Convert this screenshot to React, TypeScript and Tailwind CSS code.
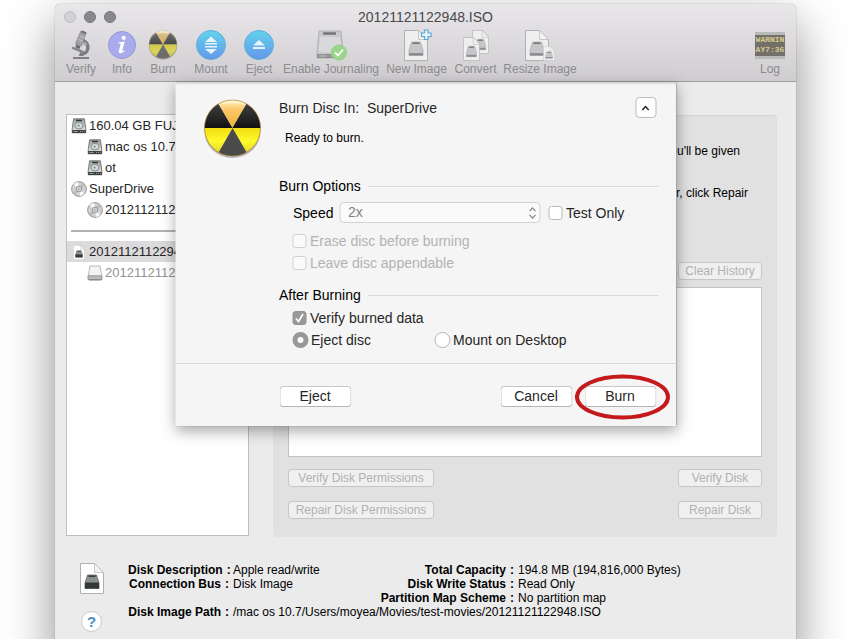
import type { ReactNode } from "react";

function DriveIcon({ className = "size-4" }: { className?: string }) {
  return (
    <svg viewBox="0 0 16 16" className={className} aria-hidden="true">
      <defs>
        <linearGradient id="drive" x1="0" y1="0" x2="0" y2="1">
          <stop offset="0" stopColor="#9aa19d" />
          <stop offset="0.75" stopColor="#d4dad7" />
          <stop offset="1" stopColor="#8a918d" />
        </linearGradient>
      </defs>
      <path d="M2.600.800h10.800l1.400 10v4H1.200v-4z" fill="url(#drive)" stroke="#5f6462" strokeWidth="0.8" />
      <path d="M1.200 12h13.600v3H1.200z" fill="#3e4341" />
      <path d="M2.500 13.500h4M9 13.500h1M11 13.500h1M13 13.500h.6" stroke="#aeb4b1" strokeWidth="0.8" />
      <path d="M5 2.500h6" stroke="#303432" strokeWidth="1.4" />
      <ellipse cx="8" cy="7.6" rx="4" ry="3.4" fill="#d5d9d7" stroke="#747a77" strokeWidth="0.8" />
      <circle cx="7.6" cy="7.6" r="1.1" fill="#858b88" />
      <path d="M8.500 8.500l2 1.800" stroke="#60666300" />
    </svg>
  );
}

function DiscIcon() {
  return (
    <svg viewBox="0 0 16 16" className="size-4" aria-hidden="true">
      <circle cx="8" cy="8" r="7.4" fill="#d3d3d3" stroke="#858585" strokeWidth="0.8" />
      <path d="M8 8L2.6 3.2A7 7 0 0 1 7 1zM8 8l5.4 4.8A7 7 0 0 1 9 15z" fill="#f7f7f7" />
      <path d="M8 8L11 1.8A7 7 0 0 1 14 5zM8 8L5 14.2A7 7 0 0 1 2 11z" fill="#bdbdbd" />
      <circle cx="8" cy="8" r="2.8" fill="#e8e8e8" stroke="#808080" strokeWidth="0.8" />
      <circle cx="8" cy="8" r="1.1" fill="#fff" stroke="#777" strokeWidth="0.6" />
    </svg>
  );
}

function VolumeIcon() {
  return (
    <svg viewBox="0 0 16 16" className="size-4" aria-hidden="true">
      <path d="M3 1h10l1.8 10v3.5H1.2V11z" fill="#f3f3f3" stroke="#ababab" strokeWidth="0.8" />
      <path d="M1.2 10.8h13.6v3.8H1.2z" fill="#bdbdbd" stroke="#8d8d8d" strokeWidth="0.8" />
      <path d="M2 15h12" stroke="#747474" strokeWidth="0.8" />
    </svg>
  );
}

function ImageDoc({ x = 0, y = 0, w = 24, h = 31, dark = false }: { x?: number; y?: number; w?: number; h?: number; dark?: boolean }) {
  return (
    <svg x={x} y={y} width={w} height={h} viewBox="0 0 24 31" preserveAspectRatio="none" aria-hidden="true">
      <path d="M.5.5h14l9 9v21H.5z" fill={dark ? "#fff" : "#efeff0"} stroke="#b0b0b3" />
      <path d="M14.5.5v9h9z" fill="#f2f2f3" stroke="#bdbdc0" strokeWidth="0.8" />
      <path d="M7.500 12h9l2.500 8v5.500H5V20z" fill={dark ? "#8b9090" : "#c6c6c9"} stroke={dark ? "#555" : "#a8a8ab"} strokeWidth="0.7" />
      <path d={dark ? "M5 19.500h14v6H5z" : "M5 23h14v2.500H5z"} fill={dark ? "#33383a" : "#8e8e92"} />
      <path d="M8.500 13.200h7" stroke={dark ? "#383d3e" : "#747478"} strokeWidth="1.600" />
    </svg>
  );
}

function BurnIcon({ className, faded = false, id }: { className: string; faded?: boolean; id: string }) {
  return (
    <svg viewBox="0 0 60 60" className={className} aria-hidden="true">
      <defs>
        <linearGradient id={id + "top"} x1="0" y1="0" x2="0" y2="1">
          <stop offset="0" stopColor="#fff3c4" />
          <stop offset="0.35" stopColor="#fbc765" />
          <stop offset="1" stopColor="#f0b23c" />
        </linearGradient>
        <linearGradient id={id + "dark"} x1="0" y1="0" x2="0" y2="1">
          <stop offset="0" stopColor="#3c3c3c" />
          <stop offset="0.5" stopColor="#2a2a2a" />
          <stop offset="1" stopColor="#111" />
        </linearGradient>
        <linearGradient id={id + "low"} x1="0" y1="0" x2="0" y2="1">
          <stop offset="0" stopColor="#f1df10" />
          <stop offset="0.55" stopColor="#fff92c" />
          <stop offset="1" stopColor="#e3da28" />
        </linearGradient>
      </defs>
      <ellipse cx="30" cy="32.500" rx="28" ry="26.500" fill="#000" opacity="0.250" />
      <g opacity={faded ? 0.6 : 1}>
        <path d="M30 29L2 29A28 28 0 0 1 16 4.800z" fill={`url(#${id}dark)`} />
        <path d="M30 29L16 4.800A28 28 0 0 1 44 4.800z" fill={`url(#${id}top)`} />
        <path d="M30 29L44 4.800A28 28 0 0 1 58 29z" fill={`url(#${id}dark)`} />
        <path d="M30 29L58 29A28 28 0 0 1 44 53.200z" fill={`url(#${id}low)`} />
        <path d="M30 29L44 53.200A28 28 0 0 1 16 53.200z" fill="#4a4a4a" />
        <path d="M30 29L16 53.200A28 28 0 0 1 2 29z" fill={`url(#${id}low)`} />
        <circle cx="30" cy="29" r="28" fill="none" stroke="#a8741c" strokeOpacity="0.600" />
        <path d="M16 6Q30-2 44 6Q30 2 16 6z" fill="#fff" opacity="0.500" />
      </g>
    </svg>
  );
}

function MicroscopeIcon() {
  return (
    <svg viewBox="0 0 24 32" className="h-8 w-6" aria-hidden="true">
      <path d="M12 2l5 2-4.500 13-6-2.300z" fill="#a2a2a5" stroke="#858588" strokeWidth="0.800" />
      <path d="M13 1.500l4.500 1.700-.700 2L12.300 3.500z" fill="#6f6f72" />
      <path d="M10.500 7l5 2M9.300 10.500l5 2" stroke="#cfcfd1" strokeWidth="0.800" />
      <path d="M7 15.500l4.500 1.800-1 2.700-4-1.500z" fill="#6d6d70" />
      <path d="M15 10c6 2.500 7.500 10 3 14.500-1.500 1.500-4 2.500-6 2.500l1-3c4.500-1 6-7 1-10.500z" fill="#7d7d80" />
      <path d="M3.500 17.500l12 4.700-.800 2.200-12-4.700z" fill="#858588" />
      <path d="M11 23l3 1.500V27h-4z" fill="#7d7d80" />
      <path d="M4 28h16v2H4z" fill="#808083" />
      <circle cx="16" cy="15" r="1.800" fill="#b0b0b2" />
    </svg>
  );
}

function RoundIcon({ kind }: { kind: "mount" | "eject" }) {
  return (
    <svg viewBox="0 0 30 30" className="size-[30px]" aria-hidden="true">
      <defs>
        <linearGradient id={kind} x1="0" y1="0" x2="0" y2="1">
          <stop offset="0" stopColor="#62d3ec" />
          <stop offset="1" stopColor="#6796e8" />
        </linearGradient>
      </defs>
      <circle cx="15" cy="15" r="14.500" fill={`url(#${kind})`} stroke="#5caee0" />
      {kind === "mount" ? (
        <path d="M15 6.500l6 5.500H9zM9 13h12v1.500H9zM9 16h12v1.500H9zM15 24l-6-5h12z" fill="#e6f3fb" />
      ) : (
        <path d="M15 10l6 5.500H9zM9 17h12v2H9z" fill="#e6f3fb" />
      )}
    </svg>
  );
}

function ToolbarItem({ label, width, children }: { label: string; width: string; children: ReactNode }) {
  return (
    <button type="button" className={`flex flex-col items-center text-xs text-[#8c8b8e] ${width}`}>
      <span className="flex h-8 items-center justify-center">{children}</span>
      <span className="h-4 leading-4 whitespace-nowrap">{label}</span>
    </button>
  );
}

function Toolbar() {
  return (
    <header className="h-[78px] rounded-t-md border-b border-[#9d9c9e] bg-linear-to-b from-[#e9e7ea] to-[#cfcdd0]">
      <div className="relative flex h-[25px] items-center pl-[9px]">
        <div className="flex gap-2">
          <button type="button" aria-label="Close" className="size-3 rounded-full border border-[#bdbcbe] bg-[#d2d1d3]" />
          <button type="button" aria-label="Minimize" className="size-3 rounded-full border border-[#77767a] bg-[#89888c]" />
          <button type="button" aria-label="Zoom" className="size-3 rounded-full border border-[#77767a] bg-[#89888c]" />
        </div>
        <h1 className="pointer-events-none absolute inset-x-0 text-center text-sm text-[#49484b]">20121121122948.ISO</h1>
      </div>
      <div className="flex gap-[9px] px-[10px]">
        <ToolbarItem label="Verify" width="w-8"><MicroscopeIcon /></ToolbarItem>
        <ToolbarItem label="Info" width="w-8">
          <svg viewBox="0 0 28 28" className="size-7" aria-hidden="true">
            <circle cx="14" cy="14" r="13.500" fill="#a9acec" stroke="#9597d8" />
            <path d="M15.700 4.800a2.100 2.100 0 1 1-.100 4.200 2.100 2.100 0 0 1 .100-4.200zM10.500 11.500l6.300-.900-2.600 9.200c-.200 1 .800.500 2-.900l.700.600c-2 3-6.700 4-6.200.800l1.900-6.700c.200-1-.600-1.200-2.200-1.200z" fill="#fff" />
          </svg>
        </ToolbarItem>
        <ToolbarItem label="Burn" width="w-8"><BurnIcon id="tb" faded className="size-[30px]" /></ToolbarItem>
        <ToolbarItem label="Mount" width="w-[46px]"><RoundIcon kind="mount" /></ToolbarItem>
        <ToolbarItem label="Eject" width="w-8"><RoundIcon kind="eject" /></ToolbarItem>
        <ToolbarItem label="Enable Journaling" width="w-[94px]">
          <svg viewBox="0 0 32 32" className="size-8" aria-hidden="true">
            <path d="M4 2h22l2 21v6H2v-6z" fill="#c9cacb" stroke="#b2b2b4" />
            <path d="M2 25h26v4H2z" fill="#8f9092" />
            <path d="M8 4.500h13" stroke="#727375" strokeWidth="2.400" />
            <path d="M5 8h20l1.500 15H3.500z" fill="#d9d9db" />
            <path d="M4 27h8M15 27h2" stroke="#c4c4c5" strokeWidth="1.200" />
            <circle cx="24" cy="23.500" r="7.500" fill="#9ad68b" stroke="#8aca7b" strokeWidth="0.800" />
            <path d="M20 23.500l3 3 5-6" fill="none" stroke="#fff" strokeWidth="1.800" />
          </svg>
        </ToolbarItem>
        <ToolbarItem label="New Image" width="w-[59px]">
          <svg viewBox="0 0 30 32" className="h-8 w-[30px]" aria-hidden="true">
            <ImageDoc x={2} y={1} w={24} h={31} />
            <path d="M22.500 1h3.500v3h3v3.500h-3v3h-3.500v-3h-3V4h3z" fill="#e8f6fd" stroke="#5fa3cf" strokeWidth="1.200" />
          </svg>
        </ToolbarItem>
        <ToolbarItem label="Convert" width="w-[41px]">
          <svg viewBox="0 0 28 32" className="h-8 w-7" aria-hidden="true">
            <ImageDoc x={10} y={1} w={17} h={24} />
            <ImageDoc x={1} y={8} w={17} h={24} />
          </svg>
        </ToolbarItem>
        <ToolbarItem label="Resize Image" width="w-[70px]">
          <svg viewBox="0 0 30 32" className="h-8 w-[30px]" aria-hidden="true">
            <ImageDoc x={0} y={1} w={24} h={31} />
            <ImageDoc x={18} y={17} w={12} h={15} />
          </svg>
        </ToolbarItem>
        <div className="grow" />
        <ToolbarItem label="Log" width="w-8">
          <span className="flex h-[27px] w-[30px] flex-col items-center justify-center overflow-hidden border-y-3 border-[#b9b9b7] bg-[#73706a] font-['Liberation_Mono'] text-[8px] leading-[10px] font-bold whitespace-nowrap text-[#d6cc8c]">
            <span>WARNIN</span>
            <span>AY7:36</span>
          </span>
        </ToolbarItem>
      </div>
    </header>
  );
}

function SidebarRow({ icon, label, tone = "" }: { icon: ReactNode; label: string; tone?: string }) {
  return (
    <li className={`flex h-[21px] items-center gap-0.5 pl-1 whitespace-nowrap ${tone}`}>
      {icon}
      <span>{label}</span>
    </li>
  );
}

function Sidebar() {
  return (
    <ul className="mb-px w-[183px] shrink-0 overflow-hidden border border-[#bfbfbf] bg-white text-[13px] text-[#262626]">
      <SidebarRow icon={<DriveIcon />} label="160.04 GB FUJ" />
      <SidebarRow icon={<DriveIcon />} label="mac os 10.7" tone="ml-4" />
      <SidebarRow icon={<DriveIcon />} label="ot" tone="ml-4" />
      <SidebarRow icon={<DiscIcon />} label="SuperDrive" />
      <SidebarRow icon={<DiscIcon />} label="2012112112" tone="ml-4" />
      <li className="flex h-[21px] items-center pl-1" aria-hidden="true">
        <span className="h-0.5 w-full bg-[#b2b2b2]" />
      </li>
      <SidebarRow
        icon={<svg viewBox="0 0 16 16" className="size-4" aria-hidden="true"><ImageDoc x={2} y={1} w={12} h={15} dark /></svg>}
        label="20121121122948"
        tone="bg-[#dcdadc]"
      />
      <SidebarRow icon={<VolumeIcon />} label="2012112112" tone="ml-4 text-[#929292]" />
    </ul>
  );
}

function DisabledButton({ children, width }: { children: ReactNode; width: string }) {
  return (
    <button type="button" disabled className={`h-[18px] rounded border border-[#c6c6c6] bg-[#f0f0f0] text-xs leading-4 whitespace-nowrap text-[#b1b1b1] ${width}`}>
      {children}
    </button>
  );
}

function FirstAid() {
  return (
    <section className="mt-px flex grow flex-col rounded-sm border-t border-[#d4d4d4] bg-[#e1e1e1] px-[15px] pt-7 pb-[18px] text-xs text-black">
      <p className="h-[14px] pr-[22px] text-right leading-[14px]">you'll be given</p>
      <p className="mt-7 h-[14px] pr-[14px] text-right leading-[14px]">installer, click Repair</p>
      <div className="mt-[62px] flex justify-end"><DisabledButton width="w-[84px]">Clear History</DisabledButton></div>
      <textarea readOnly aria-label="History" className="mt-[7px] h-[170px] w-full resize-none border border-[#c2c2c2] bg-white" />
      <div className="mt-3 flex justify-between">
        <DisabledButton width="w-[146px]">Verify Disk Permissions</DisabledButton>
        <DisabledButton width="w-[84px]">Verify Disk</DisabledButton>
      </div>
      <div className="mt-[14px] flex justify-between">
        <DisabledButton width="w-[146px]">Repair Disk Permissions</DisabledButton>
        <DisabledButton width="w-[84px]">Repair Disk</DisabledButton>
      </div>
    </section>
  );
}

function SectionTitle({ children, className }: { children: ReactNode; className: string }) {
  return (
    <div className={`flex h-[18px] items-center gap-2 ${className}`}>
      <h2 className="whitespace-nowrap">{children}</h2>
      <span className="h-px grow bg-[#dadada]" />
    </div>
  );
}

function Tick({ label, disabled, checked }: { label: string; disabled?: boolean; checked?: boolean }) {
  return (
    <label className={`flex h-[22px] items-center gap-1 whitespace-nowrap ${disabled ? "text-[#b3b3b3]" : "text-[#262626]"}`}>
      <span className="grid place-items-center">
        <input
          type="checkbox"
          disabled={disabled}
          defaultChecked={checked}
          className="peer col-start-1 row-start-1 size-[14px] appearance-none rounded-[3px] border border-[#b9b9b9] bg-white checked:border-[#929295] checked:bg-[#98989b] disabled:border-[#d0d0d0] disabled:bg-[#fafafa]"
        />
        <svg viewBox="0 0 14 14" className="pointer-events-none invisible col-start-1 row-start-1 size-[14px] peer-checked:visible" aria-hidden="true">
          <path d="M3.500 7.500l2.500 3 4.500-7.500" fill="none" stroke="#fff" strokeWidth="1.700" />
        </svg>
      </span>
      {label}
    </label>
  );
}

function Radio({ label, checked, className }: { label: string; checked?: boolean; className: string }) {
  return (
    <label className={`flex items-center gap-[3px] whitespace-nowrap text-[#262626] ${className}`}>
      <input
        type="radio"
        name="after"
        defaultChecked={checked}
        className="size-4 appearance-none rounded-full border border-[#b5b5b5] bg-white checked:border-5 checked:border-[#98989b]"
      />
      {label}
    </label>
  );
}

function PushButton({ children }: { children: ReactNode }) {
  return (
    <button type="button" className="h-[21px] w-[72px] rounded border border-[#c8c8c8] border-b-[#b4b4b4] bg-white leading-[19px] text-[#262626]">
      {children}
    </button>
  );
}

function BurnSheet() {
  return (
    <div role="dialog" aria-label="Burn Disc" className="absolute top-[78px] left-1/2 w-[501px] -translate-x-1/2 bg-[#f5f5f5] text-sm leading-[18px] text-black shadow-[0_5px_14px_rgba(0,0,0,0.35),0_0_1px_rgba(0,0,0,0.5),inset_0_3px_3px_-2px_rgba(0,0,0,0.2)]">
      <div className="flex gap-[17px] pt-[15px] pr-[18px] pl-[27px]">
        <BurnIcon id="big" className="mt-0.5 size-[60px] shrink-0" />
        <div className="grow">
          <div className="flex h-[21px] items-center pr-0.5">
            <p className="grow whitespace-pre text-[#262626]">Burn Disc In:  SuperDrive</p>
            <button type="button" aria-label="Collapse" className="flex size-[21px] items-center justify-center rounded border border-[#bcbcbc] bg-white">
              <svg viewBox="0 0 8 6" className="h-1.5 w-2" aria-hidden="true"><path d="M.800 5L4 1.500 7.200 5" fill="none" stroke="#222" strokeWidth="1.500" /></svg>
            </button>
          </div>
          <p className="mt-[11px] pl-1.5 text-xs leading-[18px]">Ready to burn.</p>
          <SectionTitle className="mt-[30px]">Burn Options</SectionTitle>
          <div className="mt-[7px] flex h-[21px] items-center pl-[14px]">
            <label htmlFor="speed" className="w-[46px]">Speed</label>
            <div className="grid w-[201px] items-center">
              <select id="speed" disabled className="col-start-1 row-start-1 h-[21px] w-full appearance-none rounded border border-[#d2d2d2] bg-[#fafafa] pl-2 text-sm leading-[19px] text-[#828282] opacity-100">
                <option>2x</option>
              </select>
              <svg viewBox="0 0 8 12" className="pointer-events-none col-start-1 row-start-1 mr-1 h-3 w-2 justify-self-end" aria-hidden="true">
                <path d="M1 4.200L4 1l3 3.200M1 7.800L4 11l3-3.200" fill="none" stroke="#8a8a8a" strokeWidth="1.200" />
              </svg>
            </div>
            <div className="ml-2"><Tick label="Test Only" /></div>
          </div>
          <div className="mt-[7px] pl-[13px]">
            <Tick label="Erase disc before burning" disabled />
            <Tick label="Leave disc appendable" disabled />
          </div>
          <SectionTitle className="mt-3">After Burning</SectionTitle>
          <div className="mt-[3px] pl-[13px]">
            <Tick label="Verify burned data" checked />
            <div className="flex h-[22px] items-center">
              <Radio label="Eject disc" checked className="w-[142px]" />
              <Radio label="Mount on Desktop" className="" />
            </div>
          </div>
        </div>
      </div>
      <div className="mt-3 flex gap-3 border-t border-[#d9d9d9] pt-[22px] pr-5 pb-[19px] pl-[104px]">
        <div className="grow"><PushButton>Eject</PushButton></div>
        <PushButton>Cancel</PushButton>
        <div className="relative h-[21px]">
          <PushButton>Burn</PushButton>
          <svg viewBox="0 0 96 46" className="pointer-events-none absolute -top-3 -left-2.5 h-[46px] w-24 max-w-none" aria-hidden="true">
            <ellipse cx="48" cy="23" rx="45.500" ry="20.500" fill="none" stroke="#c41a1c" strokeWidth="4" />
          </svg>
        </div>
      </div>
    </div>
  );
}

function DiskInfo() {
  const label = "text-right font-bold";
  return (
    <footer className="flex pt-[26px]">
      <div className="flex w-[73px] shrink-0 flex-col items-center gap-[17px]">
        <svg viewBox="0 0 24 31" className="h-[31px] w-6" aria-hidden="true"><ImageDoc dark /></svg>
        <button type="button" className="size-[21px] rounded-full border border-[#c9c9c9] bg-white text-[15px] leading-[19px] font-bold text-[#4d8cc0]">?</button>
      </div>
      <dl className="grid grow auto-rows-[14px] grid-cols-[105px_143px_142px_1fr] content-start text-xs leading-[14px] whitespace-nowrap text-black">
        <dt className={label}>Disk Description<span className="px-1">:</span></dt>
        <dd>Apple read/write</dd>
        <dt className={label}>Total Capacity<span className="px-1">:</span></dt>
        <dd>194.8 MB (194,816,000 Bytes)</dd>
        <dt className={label}>Connection Bus<span className="px-1">:</span></dt>
        <dd>Disk Image</dd>
        <dt className={label}>Disk Write Status<span className="px-1">:</span></dt>
        <dd>Read Only</dd>
        <dt className={`col-start-3 ${label}`}>Partition Map Scheme<span className="px-1">:</span></dt>
        <dd>No partition map</dd>
        <dt className={`col-start-1 ${label}`}>Disk Image Path<span className="px-1">:</span></dt>
        <dd className="col-span-3">/mac os 10.7/Users/moyea/Movies/test-movies/20121121122948.ISO</dd>
      </dl>
    </footer>
  );
}

export default function App() {
  return (
    <div className="flex h-screen flex-col overflow-hidden bg-white px-[55px] pt-1 font-['Liberation_Sans',Arial,sans-serif]">
      <main className="relative min-h-[660px] shrink-0 rounded-t-md bg-[#ebebeb] shadow-[0_20px_50px_rgba(0,0,0,0.45),0_0_1px_rgba(0,0,0,0.6)]">
        <Toolbar />
        <div className="flex gap-6 pt-8 pr-[19px] pl-[11px]">
          <Sidebar />
          <FirstAid />
        </div>
        <DiskInfo />
        <BurnSheet />
      </main>
    </div>
  );
}
